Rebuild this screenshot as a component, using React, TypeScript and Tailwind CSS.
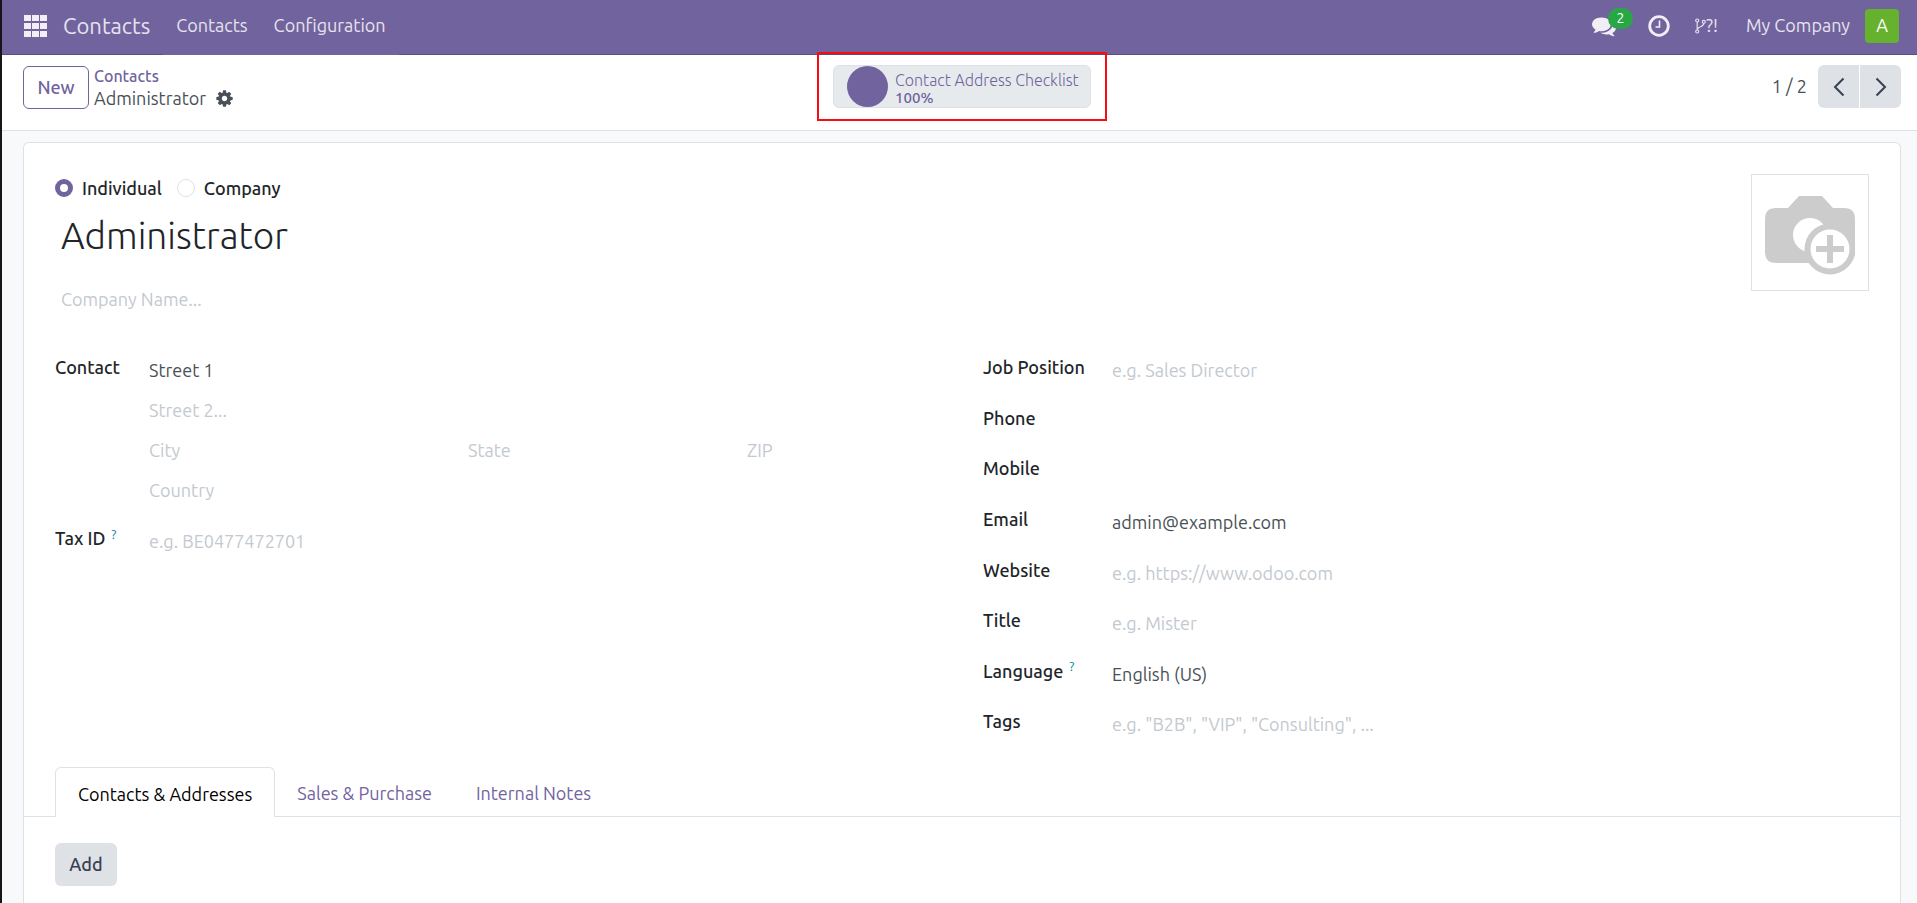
import { ReactNode, useState } from "react";

const COMMENTS_PATH =
  "M1408 768q0 139-94 257t-256.5 186.5-353.5 68.5q-86 0-176-16-124 88-278 128-36 9-86 16h-3q-11 0-20.500-8t-11.500-21q-1-3-1-6.500t.5-6.500 2-6l2.500-5 3.500-5.500 4-5 4.500-5 4-4.500q5-6 23-25t26-29.500 22.500-29 25-38.500 20.500-44q-124-72-195-177t-71-224q0-139 94-257t256.500-186.500 353.500-68.500 353.500 68.500 256.500 186.500 94 257zm384 256q0 120-71 224.500t-195 176.500q10 24 20.500 44t25 38.500 22.500 29 26 29.500 23 25q1 1 4 4.500t4.500 5 4 5 3.500 5.500l2.500 5 2 6 .5 6.500-1 6.500q-3 14-13 22t-22 7q-50-7-86-16-154-40-278-128-90 16-176 16-271 0-472-132 58 4 88 4 161 0 309-45t264-129q125-92 192-212t67-254q0-77-23-152 129 71 204 178t75 230z";

const COG_PATH =
  "M1152 896q0-106-75-181t-181-75-181 75-75 181 75 181 181 75 181-75 75-181zm512-109v222q0 12-8 23t-20 13l-185 28q-19 54-39 91 35 50 107 138 10 12 10 25t-9 23q-27 37-99 108t-94 71q-12 0-26-9l-138-108q-44 23-91 38-16 136-29 186-7 28-36 28h-222q-14 0-24.5-8.5t-11.5-21.500l-28-184q-49-16-90-37l-141 107q-10 9-25 9-14 0-25-11-126-114-165-168-7-10-7-23 0-12 8-23 15-21 51-66.500t54-70.500q-27-50-41-99l-183-27q-13-2-21-12.500t-8-23.500v-222q0-12 8-23t19-13l186-28q14-46 39-92-40-57-107-138-10-12-10-24 0-10 9-23 26-36 98.500-107.500t94.500-71.500q13 0 26 10l138 107q44-23 91-38 16-136 29-186 7-28 36-28h222q14 0 24.500 8.500t11.500 21.500l28 184q49 16 90 37l142-107q9-9 24-9 13 0 25 10 129 119 165 170 7 8 7 22 0 12-8 23-15 21-51 66.500t-54 70.500q26 50 41 98l183 28q13 2 21 12.500t8 23.500z";

const FIELD =
  "block w-full min-w-0 appearance-none bg-transparent text-[#495057] placeholder:text-[#c3c9cf] placeholder:opacity-100 outline-none";

function AppsIcon() {
  return (
    <svg viewBox="0 0 23 22" className="h-[22px] w-[23px]" fill="#f1eff5" aria-hidden="true">
      {[0, 8, 16].map((y) =>
        [0, 8, 16].map((x) => <rect key={`${x}-${y}`} x={x} y={y} width="7" height="6" />)
      )}
    </svg>
  );
}

function ClockIcon() {
  return (
    <svg viewBox="0 0 22 22" className="size-[22px]" fill="none" stroke="#f1eff5" aria-hidden="true">
      <circle cx="11" cy="11" r="9.300" strokeWidth="2.800" />
      <path d="M11.500 5.500V12H7.500" strokeWidth="1.600" />
    </svg>
  );
}

function ForkIcon() {
  return (
    <svg viewBox="0 0 11 16" className="h-4 w-[11px]" fill="none" stroke="#e3e0ec" strokeWidth="1.200" aria-hidden="true">
      <circle cx="2.200" cy="2.500" r="1.500" />
      <circle cx="2.200" cy="13.500" r="1.500" />
      <circle cx="8.800" cy="3.800" r="1.500" />
      <path d="M2.200 4v8M8.800 5.300c0 4-5.500 2.700-6.300 6" />
    </svg>
  );
}

function Chevron({ d }: { d: string }) {
  return (
    <svg viewBox="0 0 12 20" className="h-5 w-3" fill="none" stroke="#374151" strokeWidth="2" aria-hidden="true">
      <path d={d} />
    </svg>
  );
}

function CameraIcon() {
  return (
    <svg viewBox="0 0 90 80" className="mt-[6px] h-20 w-[90px]" aria-hidden="true">
      <path
        d="M11 12H23L34 0H57L68 12H79Q90 12 90 23V56Q90 67 79 67H11Q0 67 0 56V23Q0 12 11 12Z"
        fill="#cccccc"
      />
      <circle cx="45" cy="39" r="17" fill="#fff" />
      <circle cx="65" cy="53" r="25.500" fill="#cccccc" />
      <circle cx="65" cy="53" r="19.500" fill="#fff" />
      <path d="M65 39v28M51 53h28" stroke="#cccccc" strokeWidth="6" />
    </svg>
  );
}

function Help() {
  return <sup className="ml-[6px] text-[13px] font-normal text-[#0180a5]">?</sup>;
}

function Row({ id, label, help, children }: { id: string; label: string; help?: boolean; children: ReactNode }) {
  return (
    <div className="flex items-start">
      <label htmlFor={id} className="w-[129px] shrink-0 leading-6 font-medium text-[#212529]">
        {label}
        {help && <Help />}
      </label>
      <div className="min-w-0 flex-1 pt-[3px] leading-6">{children}</div>
    </div>
  );
}

function NavBar() {
  return (
    <header className="flex h-[55px] items-stretch bg-[#71639e] pr-[18px] pl-[22px] text-[#e6e3ee] shadow-[inset_0_-1px_0_#5a4f7f]">
      <button type="button" aria-label="Apps" className="mb-1 flex items-center">
        <AppsIcon />
      </button>
      <a href="#contacts" className="mb-1 ml-4 flex items-center text-[22px]">
        Contacts
      </a>
      <nav className="ml-[13px] flex bg-[#71639e] pb-1">
        <a href="#contacts" className="flex items-center px-[13px]">
          Contacts
        </a>
        <a href="#configuration" className="flex items-center px-[13px]">
          Configuration
        </a>
      </nav>
      <div className="mb-1 ml-auto flex items-center">
        <button type="button" aria-label="Messages" className="relative mr-[32px]">
          <svg viewBox="0 0 1792 1792" className="size-6" fill="#f1eff5" aria-hidden="true">
            <path d={COMMENTS_PATH} />
          </svg>
          <span className="absolute -top-[6px] left-4 flex h-[21px] w-[25px] items-center justify-center rounded-full bg-[#28a745] text-[14px] text-white">
            2
          </span>
        </button>
        <button type="button" aria-label="Activities" className="mr-[25px]">
          <ClockIcon />
        </button>
        <button type="button" className="mr-7 flex items-center">
          <ForkIcon />
          <span>?!</span>
        </button>
        <button type="button" className="mr-[15px]">
          My Company
        </button>
        <button
          type="button"
          className="flex size-[34px] items-center justify-center rounded bg-[#66b22e] text-white"
        >
          A
        </button>
      </div>
    </header>
  );
}

function ControlPanel() {
  return (
    <div className="grid h-[76px] grid-cols-[1fr_auto_1fr] items-start border-b border-[#dee2e6] bg-white pt-[10px] pr-4 pl-[21px]">
      <div className="flex items-center">
        <button type="button" className="h-[43px] w-[66px] rounded-md border border-[#71639e] font-medium text-[#71639e]">
          New
        </button>
        <div className="ml-[5px] leading-[22px]">
          <a href="#contacts" className="block text-[16px] font-medium text-[#71639e]">
            Contacts
          </a>
          <div className="flex items-center text-[#495057]">
            Administrator
            <button type="button" aria-label="Actions" className="ml-[9px]">
              <svg viewBox="0 0 1792 1792" className="size-[19px]" fill="#495057" aria-hidden="true">
                <path d={COG_PATH} />
              </svg>
            </button>
          </div>
        </div>
      </div>
      <div className="relative">
        <button
          type="button"
          className="flex h-[43px] w-[258px] items-center rounded-md border border-[#dee2e6] bg-[#e7eaed] pl-[13px] text-left leading-[18px] text-[#71639e]"
        >
          <span className="size-[41px] shrink-0 rounded-full bg-[#71639e]" />
          <span className="ml-[7px] pt-1 whitespace-nowrap">
            <span className="block text-[16px] font-light">Contact Address Checklist</span>
            <span className="block text-[15px] font-medium">100%</span>
          </span>
        </button>
        <div className="pointer-events-none absolute -inset-x-4 -inset-y-[13px] border-2 border-[#f80c12]" />
      </div>
      <div className="flex items-center justify-end">
        <span className="mr-[11px] text-[#495057]">1 / 2</span>
        <button
          type="button"
          aria-label="Previous"
          className="flex h-[43px] w-[41px] items-center justify-center rounded-l-md bg-[#dee2e6]"
        >
          <Chevron d="M10.500 1.500L2 10L10.500 18.500" />
        </button>
        <button
          type="button"
          aria-label="Next"
          className="ml-px flex h-[43px] w-[41px] items-center justify-center rounded-r-md bg-[#dee2e6]"
        >
          <Chevron d="M1.500 1.500L10 10L1.500 18.500" />
        </button>
      </div>
    </div>
  );
}

function TypeRadio({ label, checked, onChange }: { label: string; checked: boolean; onChange: () => void }) {
  return (
    <label className="flex items-center gap-[9px] font-medium text-[#212529]">
      <input
        type="radio"
        name="company_type"
        checked={checked}
        onChange={onChange}
        className="size-[18px] appearance-none rounded-full border border-[#dee2e6] bg-white checked:border-[5px] checked:border-[#71639e]"
      />
      {label}
    </label>
  );
}

const TABS = ["Contacts & Addresses", "Sales & Purchase", "Internal Notes"];

export default function App() {
  const [type, setType] = useState("Individual");
  const [tab, setTab] = useState(TABS[0]);

  return (
    <div className="flex h-screen flex-col overflow-hidden border-l-2 border-[#16161a] bg-[#f8f9fa] font-['Ubuntu','Noto_Sans',sans-serif] text-[18px]">
      <NavBar />
      <ControlPanel />
      <main className="mt-[11px] mr-4 ml-[21px] flex-1 rounded-t-md border border-b-0 border-[#dee2e6] bg-white">
        <div className="flex items-start justify-between px-[31px] pt-[31px]">
          <div className="min-w-0 flex-1">
            <div className="flex h-7 items-center gap-[15px]">
              {["Individual", "Company"].map((t) => (
                <TypeRadio key={t} label={t} checked={type === t} onChange={() => setType(t)} />
              ))}
            </div>
            <input
              aria-label="Name"
              defaultValue="Administrator"
              className="mt-2 block h-[52px] w-full bg-transparent px-[6px] text-[37px] font-light text-[#212529] outline-none"
            />
            <input
              aria-label="Company Name"
              placeholder="Company Name..."
              className={`${FIELD} mt-[23px] h-7 px-[6px]`}
            />
          </div>
          <button
            type="button"
            aria-label="Upload photo"
            className="flex h-[117px] w-[118px] items-center justify-center border border-[#dee2e6]"
          >
            <CameraIcon />
          </button>
        </div>

        <div className="mt-[42px] grid grid-cols-2 gap-x-[42px] px-[31px]">
          <div>
            <div className="flex items-start">
              <label htmlFor="street" className="w-[94px] shrink-0 leading-6 font-medium text-[#212529]">
                Contact
              </label>
              <div className="grid min-w-0 flex-1 grid-cols-[319px_279px_1fr] gap-y-4 pt-[3px] leading-6">
                <input id="street" defaultValue="Street 1" className={`${FIELD} col-span-3 h-6`} />
                <input aria-label="Street 2" placeholder="Street 2..." className={`${FIELD} col-span-3 h-6`} />
                <input aria-label="City" placeholder="City" className={`${FIELD} h-6`} />
                <input aria-label="State" placeholder="State" className={`${FIELD} h-6`} />
                <input aria-label="ZIP" placeholder="ZIP" className={`${FIELD} h-6`} />
                <input aria-label="Country" placeholder="Country" className={`${FIELD} col-span-3 h-6`} />
              </div>
            </div>
            <div className="mt-6 flex items-start">
              <label htmlFor="vat" className="w-[94px] shrink-0 leading-6 font-medium text-[#212529]">
                Tax ID
                <Help />
              </label>
              <input id="vat" placeholder="e.g. BE0477472701" className={`${FIELD} mt-[3px] h-6 flex-1`} />
            </div>
          </div>
          <div className="grid h-[405px] grid-rows-8">
            <Row id="job" label="Job Position">
              <input id="job" placeholder="e.g. Sales Director" className={`${FIELD} h-6`} />
            </Row>
            <Row id="phone" label="Phone">
              <input id="phone" type="tel" className={`${FIELD} h-6`} />
            </Row>
            <Row id="mobile" label="Mobile">
              <input id="mobile" type="tel" className={`${FIELD} h-6`} />
            </Row>
            <Row id="email" label="Email">
              <input id="email" type="email" defaultValue="admin@example.com" className={`${FIELD} h-6`} />
            </Row>
            <Row id="website" label="Website">
              <input id="website" placeholder="e.g. https://www.odoo.com" className={`${FIELD} h-6`} />
            </Row>
            <Row id="title" label="Title">
              <input id="title" placeholder="e.g. Mister" className={`${FIELD} h-6`} />
            </Row>
            <Row id="lang" label="Language" help>
              <select id="lang" className={`${FIELD} h-6`}>
                <option>English (US)</option>
              </select>
            </Row>
            <Row id="tags" label="Tags">
              <input id="tags" placeholder={'e.g. "B2B", "VIP", "Consulting", ...'} className={`${FIELD} h-6`} />
            </Row>
          </div>
        </div>

        <div role="tablist" className="mt-[7px] flex border-b border-[#dee2e6] px-[31px]">
          {TABS.map((t) => (
            <button
              key={t}
              type="button"
              role="tab"
              aria-selected={tab === t}
              onClick={() => setTab(t)}
              className={
                tab === t
                  ? "-mb-px h-[50px] rounded-t-md border border-b-0 border-[#dee2e6] bg-white px-[22px] pt-1 text-black"
                  : "h-[49px] px-[22px] pt-1 text-[#71639e]"
              }
            >
              {t}
            </button>
          ))}
        </div>
        <div className="px-[31px] pt-[26px]">
          <button type="button" className="h-[43px] w-[62px] rounded-md bg-[#dee2e6] font-medium text-[#374151]">
            Add
          </button>
        </div>
      </main>
    </div>
  );
}
